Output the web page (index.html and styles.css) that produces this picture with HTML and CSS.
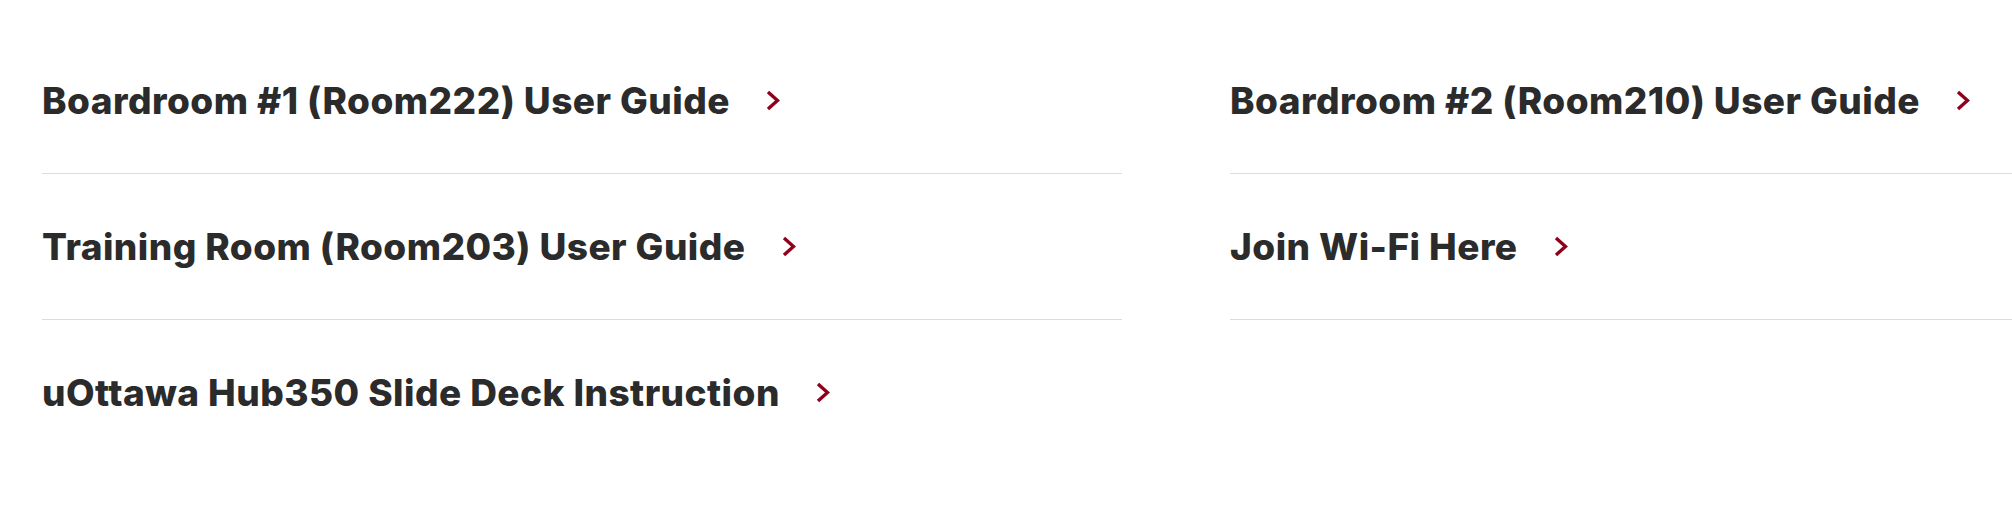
FILE: index.html
```html
<!DOCTYPE html>
<html>
<head>
    <meta charset="UTF-8">
    <meta name="viewport" content="width=device-width, initial-scale=1.0">
    <title>Room Guides</title>
    <link rel="stylesheet" href="styles.css">
</head>
<body>
    <div class="guide-list">
        <a class="guide-link" href="#">
            <span class="guide-title">Boardroom #1 (Room222) User Guide</span>
            <svg class="chevron" width="14" height="21" viewBox="0 0 14 21"><polyline points="2,2 11.5,10.5 2,19"/></svg>
        </a>
        <a class="guide-link" href="#">
            <span class="guide-title">Boardroom #2 (Room210) User Guide</span>
            <svg class="chevron" width="14" height="21" viewBox="0 0 14 21"><polyline points="2,2 11.5,10.5 2,19"/></svg>
        </a>
        <a class="guide-link" href="#">
            <span class="guide-title">Training Room (Room203) User Guide</span>
            <svg class="chevron" width="14" height="21" viewBox="0 0 14 21"><polyline points="2,2 11.5,10.5 2,19"/></svg>
        </a>
        <a class="guide-link" href="#">
            <span class="guide-title">Join Wi-Fi Here</span>
            <svg class="chevron" width="14" height="21" viewBox="0 0 14 21"><polyline points="2,2 11.5,10.5 2,19"/></svg>
        </a>
        <a class="guide-link" href="#">
            <span class="guide-title">uOttawa Hub350 Slide Deck Instruction</span>
            <svg class="chevron" width="14" height="21" viewBox="0 0 14 21"><polyline points="2,2 11.5,10.5 2,19"/></svg>
        </a>
    </div>
</body>
</html>
```

FILE: styles.css
```css
body {
    margin: 0;
    padding: 28px 0 0 42px;
    font-family: Inter, "Liberation Sans", sans-serif;
    background-color: #fff;
    overflow: hidden;
}

.guide-list {
    display: grid;
    grid-template-columns: 1080px minmax(0, 1fr);
    column-gap: 108px;
}

.guide-link {
    display: flex;
    align-items: center;
    gap: 36px;
    height: 145px;
    border-bottom: 1px solid #dcdcdc;
    color: #2b2b2b;
    text-decoration: none;
}

.guide-link:last-child {
    border-bottom: none;
}

.guide-title {
    font-size: 37px;
    font-weight: 800;
    letter-spacing: 0.45px;
    white-space: nowrap;
}

.chevron {
    flex-shrink: 0;
    fill: none;
    stroke: #8f001a;
    stroke-width: 3.4;
}
```
